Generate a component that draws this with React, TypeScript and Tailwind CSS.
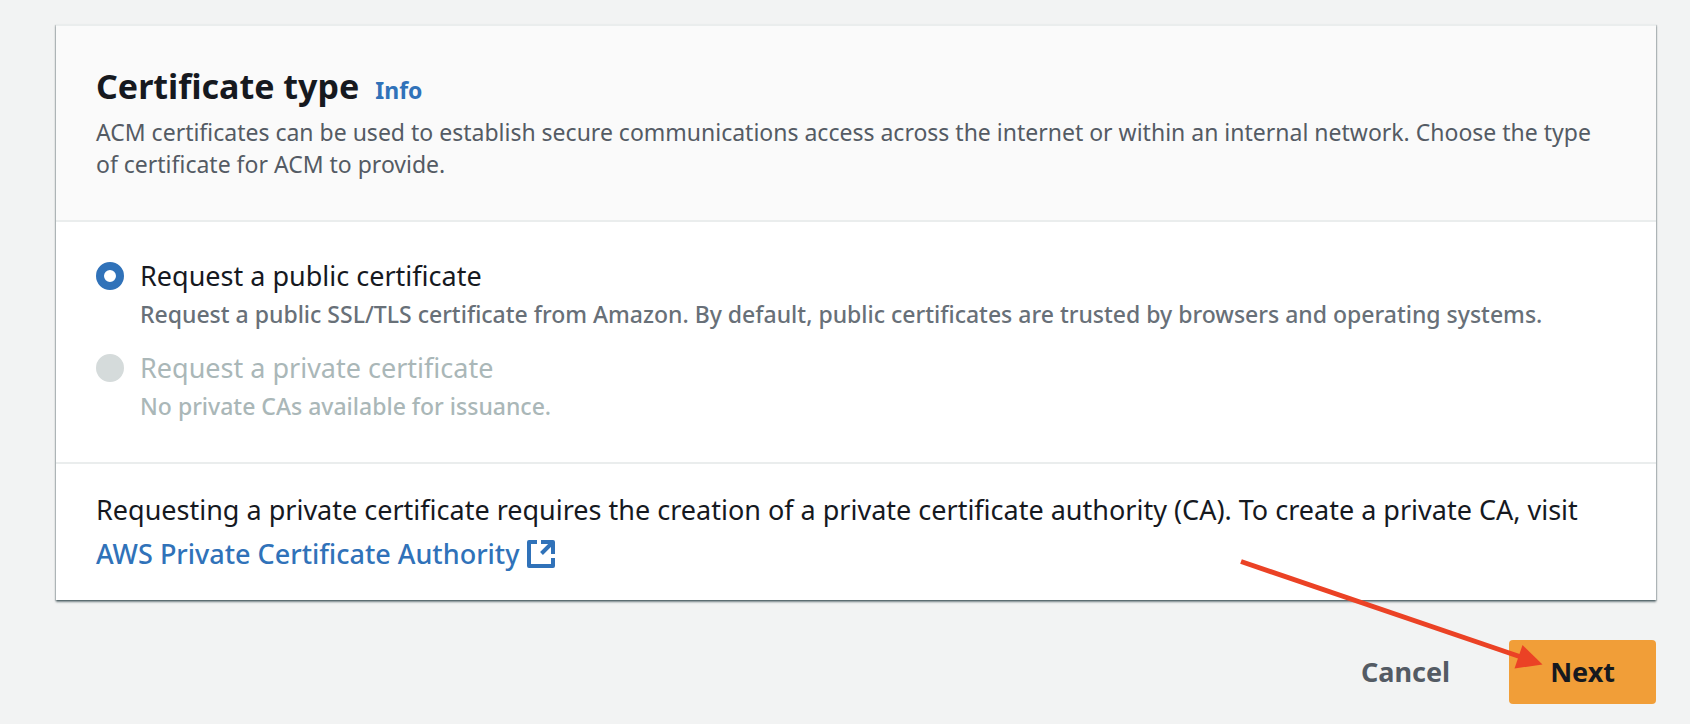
import { useState } from "react";

interface OptionProps {
  id: string;
  label: string;
  description: string;
  checked: boolean;
  disabled?: boolean;
  onSelect: () => void;
}

function RadioOption({ id, label, description, checked, disabled = false, onSelect }: OptionProps) {
  return (
    <div className="flex gap-4">
      <input
        type="radio"
        id={id}
        name="certificate-type"
        checked={checked}
        disabled={disabled}
        onChange={onSelect}
        aria-describedby={`${id}-description`}
        className="mt-1 size-7 shrink-0 appearance-none rounded-full border-2 border-[#687078] bg-white checked:border-8 checked:border-[#3072b9] disabled:border-[#d5dbdb] disabled:bg-[#d5dbdb]"
      />
      <div className="min-w-0">
        <label
          htmlFor={id}
          className={`block text-[27px] leading-9 ${disabled ? "text-[#aab7b8]" : "text-[#16191f]"}`}
        >
          {label}
        </label>
        <p
          id={`${id}-description`}
          className={`mt-1 text-[23px] leading-8 font-medium ${disabled ? "text-[#aab7b8]" : "text-[#687078]"}`}
        >
          {description}
        </p>
      </div>
    </div>
  );
}

function ExternalIcon() {
  return (
    <svg viewBox="0 0 28 28" className="ml-2 inline-block size-7 align-[-4px]" fill="none" stroke="currentColor" strokeWidth="4" aria-hidden="true">
      <path d="M10 2H2v24h24v-8" strokeLinejoin="round" />
      <path d="M14 2h12v12M26 2L14.500 13.500" strokeLinejoin="round" />
    </svg>
  );
}

function Arrow() {
  return (
    <svg
      viewBox="0 0 306 115"
      className="pointer-events-none absolute right-[111px] bottom-8 h-[115px] w-[306px]"
      aria-hidden="true"
    >
      <path d="M2 4.500L282 100" stroke="#eb4225" strokeWidth="5" />
      <path d="M303.500 107.500L283.500 88L275.500 111.500Z" fill="#eb4225" />
    </svg>
  );
}

export default function App() {
  const [type, setType] = useState("public");

  return (
    <div className="min-h-screen bg-[#f2f3f3] py-5 pr-[34px] pl-14 font-['Noto_Sans',sans-serif] text-[#16191f]">
      <main className="pt-1">
        <section className="border-t-2 border-[#eaeded] bg-white shadow-[0_2px_2px_rgba(0,28,36,0.5),1px_1px_1px_rgba(0,28,36,0.15),-1px_1px_1px_rgba(0,28,36,0.15)]">
          <header className="border-b-2 border-[#eaeded] bg-[#fafafa] px-10 pt-[38px] pb-10">
            <div className="flex items-baseline gap-4">
              <h2 className="text-[34px] leading-[44px] font-bold">Certificate type</h2>
              <a href="#info" className="text-[23px] leading-8 font-bold text-[#3072b9]">
                Info
              </a>
            </div>
            <p className="mt-2 text-[23px] leading-8 text-[#545b64]">
              ACM certificates can be used to establish secure communications access across the internet or within an
              internal network. Choose the type of certificate for ACM to provide.
            </p>
          </header>

          <div role="radiogroup" aria-label="Certificate type" className="flex flex-col gap-5 px-10 pt-9 pb-10">
            <RadioOption
              id="public"
              label="Request a public certificate"
              description="Request a public SSL/TLS certificate from Amazon. By default, public certificates are trusted by browsers and operating systems."
              checked={type === "public"}
              onSelect={() => setType("public")}
            />
            <RadioOption
              id="private"
              label="Request a private certificate"
              description="No private CAs available for issuance."
              checked={type === "private"}
              disabled
              onSelect={() => setType("private")}
            />
          </div>

          <footer className="border-t-2 border-[#eaeded] px-10 py-6 text-[27px] leading-[44px]">
            Requesting a private certificate requires the creation of a private certificate authority (CA). To create a
            private CA, visit{" "}
            <a href="#private-ca" className="inline-block font-medium text-[#3072b9]">
              AWS Private Certificate Authority
              <ExternalIcon />
            </a>
          </footer>
        </section>

        <div className="mt-10 flex justify-end gap-5 text-[27px] leading-10 font-bold">
          <button type="button" className="h-16 px-[39px] text-[#545b64]">
            Cancel
          </button>
          <div className="relative">
            <button type="button" className="h-16 rounded bg-[#f19e38] px-[41px]">
              Next
            </button>
            <Arrow />
          </div>
        </div>
      </main>
    </div>
  );
}
